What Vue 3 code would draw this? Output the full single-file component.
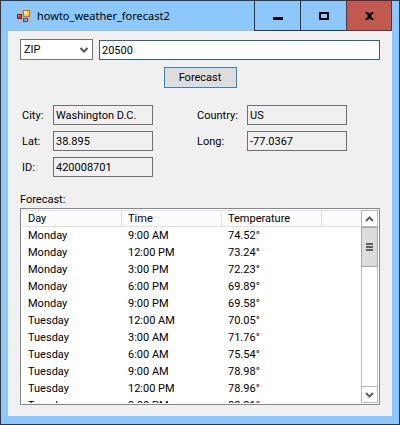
<script setup>
import { ref } from 'vue'

const modes = ['ZIP', 'City', 'ID']
const mode = ref('ZIP')
const query = ref('20500')

const left = [
  { id: 'city', label: 'City:', value: 'Washington D.C.' },
  { id: 'lat', label: 'Lat:', value: '38.895' },
  { id: 'id', label: 'ID:', value: '420008701' },
]
const right = [
  { id: 'country', label: 'Country:', value: 'US' },
  { id: 'long', label: 'Long:', value: '-77.0367' },
]

const rows = [
  ['Monday', '9:00 AM', '74.52°'],
  ['Monday', '12:00 PM', '73.24°'],
  ['Monday', '3:00 PM', '72.23°'],
  ['Monday', '6:00 PM', '69.89°'],
  ['Monday', '9:00 PM', '69.58°'],
  ['Tuesday', '12:00 AM', '70.05°'],
  ['Tuesday', '3:00 AM', '71.76°'],
  ['Tuesday', '6:00 AM', '75.54°'],
  ['Tuesday', '9:00 AM', '78.98°'],
  ['Tuesday', '12:00 PM', '78.96°'],
  ['Tuesday', '3:00 PM', '80.81°'],
]
</script>

<template>
  <div class="window">
    <header class="titlebar">
      <svg class="app-icon" width="14" height="14" viewBox="0 0 14 14" shape-rendering="crispEdges" aria-hidden="true">
        <rect width="14" height="14" fill="#b4b9c0" />
        <rect x="1" y="1" width="4" height="3" fill="#9cc4e8" />
        <rect x="1" y="11" width="3" height="2" fill="#9cc4e8" />
        <rect x="6" y="1" width="7" height="7" fill="#a87a10" />
        <rect x="7" y="2" width="5" height="5" fill="#f8c93c" />
        <rect x="7" y="2" width="3" height="3" fill="#ffe796" />
        <rect x="0" y="5" width="5" height="5" fill="#8f1513" />
        <rect x="1" y="6" width="3" height="3" fill="#d9433a" />
        <rect x="1" y="6" width="1" height="1" fill="#f6a69c" />
        <rect x="6" y="9" width="5" height="4" fill="#2c58b4" />
        <rect x="7" y="10" width="3" height="2" fill="#77a7f4" />
      </svg>
      <h1 class="title">howto_weather_forecast2</h1>
      <div class="controls">
        <button class="ctl" type="button" aria-label="Minimize">
          <svg width="10" height="9" viewBox="0 0 10 9" shape-rendering="crispEdges"><rect y="6" width="10" height="3" /></svg>
        </button>
        <button class="ctl" type="button" aria-label="Maximize">
          <svg width="10" height="8" viewBox="0 0 10 8" shape-rendering="crispEdges"><rect x="1" y="1" width="8" height="6" fill="none" stroke="#000" stroke-width="2" /></svg>
        </button>
        <button class="ctl close" type="button" aria-label="Close">
          <svg width="9" height="8" viewBox="0 0 9 8"><path d="M0 0h3l1.500 2L6 0h3L6 4l3 4H6L4.500 6 3 8H0l3-4z" /></svg>
        </button>
      </div>
    </header>

    <main class="client">
      <div class="search">
        <div class="combo">
          <select v-model="mode" aria-label="Search by">
            <option v-for="m in modes" :key="m">{{ m }}</option>
          </select>
          <svg class="arrow" width="8" height="6" viewBox="0 0 8 6" aria-hidden="true"><path d="M0.500 1 4 4.500 7.500 1" fill="none" stroke="#555" stroke-width="2" /></svg>
        </div>
        <input v-model="query" class="query" type="text" aria-label="Location" />
      </div>
      <button class="go" type="button">Forecast</button>

      <div class="details">
        <div class="group">
          <template v-for="f in left" :key="f.id">
            <label :for="f.id">{{ f.label }}</label>
            <input :id="f.id" type="text" readonly :value="f.value" />
          </template>
        </div>
        <div class="group wide">
          <template v-for="f in right" :key="f.id">
            <label :for="f.id">{{ f.label }}</label>
            <input :id="f.id" type="text" readonly :value="f.value" />
          </template>
        </div>
      </div>

      <h2 id="list-label" class="list-label">Forecast:</h2>
      <div class="list">
        <div class="view">
          <table aria-labelledby="list-label">
            <thead>
              <tr><th>Day</th><th>Time</th><th>Temperature</th><td></td></tr>
            </thead>
            <tbody>
              <tr v-for="(r, i) in rows" :key="i">
                <td v-for="c in r" :key="c">{{ c }}</td>
                <td></td>
              </tr>
            </tbody>
          </table>
        </div>
        <div class="scrollbar">
          <button type="button" aria-label="Scroll up">
            <svg width="9" height="6" viewBox="0 0 9 6"><path d="M1 5 4.500 1.500 8 5" fill="none" stroke="#606060" stroke-width="2" /></svg>
          </button>
          <div class="track"><div class="thumb"><i></i><i></i><i></i></div></div>
          <button type="button" aria-label="Scroll down">
            <svg width="9" height="6" viewBox="0 0 9 6"><path d="M1 1 4.500 4.500 8 1" fill="none" stroke="#606060" stroke-width="2" /></svg>
          </button>
        </div>
      </div>
    </main>
  </div>
</template>

<style>
body { margin: 0; }
</style>

<style scoped>
* { box-sizing: border-box; }
.window {
  display: flex;
  flex-direction: column;
  height: 100vh;
  padding: 0 7px 8px;
  border: 1px solid #33363c;
  background: #8cc8fb;
  color: #000;
  font: 11px/15px Roboto, "Liberation Sans", sans-serif;
}
button, input, select { font: inherit; color: inherit; margin: 0; border-radius: 0; }
.titlebar { display: flex; flex: none; height: 29px; padding-left: 9px; align-items: center; }
.app-icon { flex: none; }
.title { flex: 1; margin: 0 0 0 6px; font: 11px/16px "Noto Sans", "Open Sans", sans-serif; }
.controls { display: flex; height: 30px; align-self: flex-start; }
.ctl {
  display: flex;
  align-items: center;
  justify-content: center;
  width: 46px;
  padding: 0;
  border: solid #2c3540;
  border-width: 0 0 1px 1px;
  background: none;
}
.close { border-color: #5c3438; border-right-width: 1px; background: #c1594f; }
.client {
  display: flex;
  flex: 1;
  flex-direction: column;
  min-height: 0;
  padding: 8px 12px 11px;
  border-top: 1px solid #9dbfdc;
  background: #f0f0f0;
}
.titlebar { position: relative; z-index: 1; }
.search { display: flex; gap: 6px; align-items: flex-end; }
.combo { display: grid; width: 73px; }
.combo > * { grid-area: 1 / 1; }
.combo select {
  appearance: none;
  height: 21px;
  padding: 0 3px;
  border: 1px solid #707070;
  background: #fff;
}
.arrow { align-self: center; justify-self: end; margin-right: 5px; pointer-events: none; }
.query { flex: 1; min-width: 0; height: 20px; padding: 0 2px; border: 1px solid #2b628f; background: #fff; }
.go {
  align-self: center;
  width: 73px;
  height: 21px;
  margin-top: 7px;
  padding: 0;
  border: 1px solid #3f80b3;
  background: #dddddd;
}
.details { display: flex; gap: 44px; margin: 17px 0 15px 2px; align-items: flex-start; }
.group { display: grid; grid-template-columns: 31px 100px; row-gap: 6px; align-items: center; }
.group.wide { grid-template-columns: 50px 100px; }
.group input { width: 100%; height: 20px; padding: 0 2px; border: 1px solid #707070; background: #f0f0f0; }
.list-label { margin: 0 0 1px; font: inherit; }
.list {
  display: flex;
  flex: 1;
  min-height: 0;
  padding: 1px;
  border: 1px solid #828790;
  background: #fff;
}
.view { flex: 1; min-width: 0; overflow: hidden; }
table { width: 100%; border-collapse: separate; border-spacing: 0; table-layout: fixed; }
th, td { height: 17px; padding: 0 6px; text-align: left; font-weight: 400; line-height: 17px; }
th { width: 100px; border: solid #e0e0e0; border-width: 1px 1px 1px 0; }
thead td { border: solid #e0e0e0; border-width: 1px 0; }
thead th, thead td { background: #fcfcfc; line-height: 15px; }
.scrollbar { display: flex; flex-direction: column; width: 17px; }
.scrollbar button {
  display: flex;
  align-items: center;
  justify-content: center;
  height: 17px;
  padding: 0;
  border: 1px solid #b8b8b8;
  background: #fff;
}
.track { flex: 1; border: solid #c0c0c0; border-width: 0 1px; }
.thumb {
  display: flex;
  flex-direction: column;
  gap: 1px;
  align-items: center;
  justify-content: center;
  height: 40px;
  margin: 0 -1px;
  border: 1px solid #a6a6a6;
  background: #dcdcdc;
}
.thumb i { width: 7px; height: 2px; background: #606060; }
</style>
